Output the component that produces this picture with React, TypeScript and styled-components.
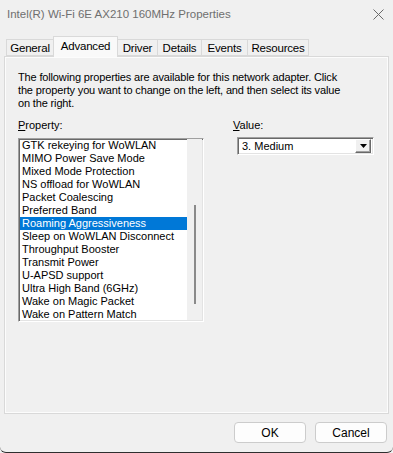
import React from 'react';
import styled, { createGlobalStyle } from 'styled-components';

const GlobalStyle = createGlobalStyle`
  html, body {
    margin: 0;
    padding: 0;
    background: #f0f0f0;
  }
  * { box-sizing: border-box; }
`;

const Window = styled.div`
  width: 393px;
  height: 453px;
  background: #f0f0f0;
  display: flex;
  flex-direction: column;
  font-family: "Liberation Sans", Arial, sans-serif;
  border-bottom: 1px solid #2e2e2e;
  border-radius: 0 0 6px 6px;
  overflow: hidden;
`;

const TitleBar = styled.div`
  height: 30px;
  display: flex;
  align-items: center;
  justify-content: space-between;
  padding: 0 9px 2px 7px;
  font-size: 11.5px;
  color: #6f6f6f;
`;

const CloseIcon = () => (
  <svg width="11" height="11" viewBox="0 0 11 11">
    <path d="M0.5 0.5 L10.5 10.5 M10.5 0.5 L0.5 10.5" stroke="#6a6a6a" strokeWidth="1" fill="none" />
  </svg>
);

const TabStrip = styled.div`
  display: flex;
  align-items: flex-end;
  height: 26px;
  padding-left: 7px;
`;

const Tab = styled.div<{ active?: boolean; w: number }>`
  width: ${p => p.w}px;
  height: ${p => (p.active ? '21px' : '17px')};
  margin-bottom: ${p => (p.active ? '-1px' : '0')};
  padding-bottom: ${p => (p.active ? '3px' : '0')};
  display: flex;
  align-items: center;
  justify-content: center;
  font-size: 11.5px;
  letter-spacing: -0.2px;
  color: #000;
  background: ${p => (p.active ? '#f9f9f9' : '#f0f0f0')};
  border: 1px solid #d9d9d9;
  border-bottom: ${p => (p.active ? 'none' : '1px solid #d9d9d9')};
  margin-left: -1px;
  position: relative;
  z-index: ${p => (p.active ? 1 : 0)};
`;

const Panel = styled.div`
  margin: 0 4px;
  height: 358px;
  border: 1px solid #d9d9d9;
  box-shadow: inset 1px 1px 0 #fcfcfc, inset -1px -1px 0 #fcfcfc;
  padding: 14px 13px 0 13px;
  font-size: 11px;
`;

const Intro = styled.p`
  margin: 0;
  line-height: 13px;
  letter-spacing: -0.15px;
  color: #000;
`;

const Columns = styled.div`
  display: flex;
  margin-top: 9px;
`;

const PropCol = styled.div`
  width: 186px;
  display: flex;
  flex-direction: column;
`;

const ValueCol = styled.div`
  margin-left: 29px;
  display: flex;
  flex-direction: column;
`;

const Label = styled.div`
  height: 13px;
  line-height: 13px;
  margin-bottom: 6px;
  u { text-decoration: underline; text-underline-offset: 1px; }
`;

const ListBox = styled.div`
  height: 184px;
  border: 1px solid;
  border-color: #a0a0a0 #ffffff #ffffff #a0a0a0;
  box-shadow: inset 1px 1px 0 #696969, inset -1px -1px 0 #e3e3e3;
  background: #fff;
  display: flex;
  padding: 0 1px 1px 1px;
  overflow: hidden;
`;

const Items = styled.div`
  flex: 1;
`;

const Item = styled.div<{ selected?: boolean }>`
  height: 13px;
  line-height: 13px;
  padding-left: 2px;
  white-space: nowrap;
  background: ${p => (p.selected ? '#0078d7' : 'transparent')};
  color: ${p => (p.selected ? '#fff' : '#000')};
`;

const ScrollTrack = styled.div`
  width: 15px;
  background: #f0f0f0;
  display: flex;
  justify-content: center;
  padding-top: 66px;
`;

const ScrollThumb = styled.div`
  width: 2px;
  height: 99px;
  margin-left: 1px;
  background: #8a8a8a;
`;

const Combo = styled.div`
  width: 137px;
  height: 18px;
  margin: -1px 0 0 4px;
  border: 1px solid;
  border-color: #a0a0a0 #ffffff #ffffff #a0a0a0;
  box-shadow: inset 1px 1px 0 #696969, inset -1px -1px 0 #e3e3e3;
  background: #fff;
  display: flex;
  align-items: center;
  padding: 2px;
`;

const ComboText = styled.div`
  flex: 1;
  padding-left: 2px;
  line-height: 13px;
`;

const ComboButton = styled.div`
  width: 16px;
  height: 14px;
  background: #f0f0f0;
  border: 1px solid;
  border-color: #fff #696969 #696969 #fff;
  box-shadow: inset -1px -1px 0 #a0a0a0;
  display: flex;
  align-items: center;
  justify-content: center;
`;

const Footer = styled.div`
  flex: 1;
  display: flex;
  justify-content: flex-end;
  align-items: flex-start;
  gap: 9px;
  padding: 8px 6px 0 0;
`;

const Button = styled.div`
  width: 72px;
  height: 21px;
  background: #fdfdfd;
  border: 1px solid #cccccc;
  border-radius: 4px;
  display: flex;
  align-items: center;
  justify-content: center;
  font-size: 12px;
  color: #000;
`;

const properties = [
  'GTK rekeying for WoWLAN',
  'MIMO Power Save Mode',
  'Mixed Mode Protection',
  'NS offload for WoWLAN',
  'Packet Coalescing',
  'Preferred Band',
  'Roaming Aggressiveness',
  'Sleep on WoWLAN Disconnect',
  'Throughput Booster',
  'Transmit Power',
  'U-APSD support',
  'Ultra High Band (6GHz)',
  'Wake on Magic Packet',
  'Wake on Pattern Match',
];

const tabs: [string, number][] = [
  ['General', 48],
  ['Advanced', 65],
  ['Driver', 41],
  ['Details', 45],
  ['Events', 47],
  ['Resources', 62],
];

export default function App() {
  return (
    <>
      <GlobalStyle />
      <Window>
        <TitleBar>
          <span>Intel(R) Wi-Fi 6E AX210 160MHz Properties</span>
          <CloseIcon />
        </TitleBar>
        <TabStrip>
          {tabs.map(([t, w]) => (
            <Tab key={t} w={w} active={t === 'Advanced'}>{t}</Tab>
          ))}
        </TabStrip>
        <Panel>
          <Intro>
            The following properties are available for this network adapter. Click<br />
            the property you want to change on the left, and then select its value<br />
            on the right.
          </Intro>
          <Columns>
            <PropCol>
              <Label><u>P</u>roperty:</Label>
              <ListBox>
                <Items>
                  {properties.map(p => (
                    <Item key={p} selected={p === 'Roaming Aggressiveness'}>{p}</Item>
                  ))}
                </Items>
                <ScrollTrack>
                  <ScrollThumb />
                </ScrollTrack>
              </ListBox>
            </PropCol>
            <ValueCol>
              <Label><u>V</u>alue:</Label>
              <Combo>
                <ComboText>3. Medium</ComboText>
                <ComboButton>
                  <svg width="7" height="4" viewBox="0 0 7 4">
                    <path d="M0 0 H7 L3.5 4 Z" fill="#000" />
                  </svg>
                </ComboButton>
              </Combo>
            </ValueCol>
          </Columns>
        </Panel>
        <Footer>
          <Button>OK</Button>
          <Button>Cancel</Button>
        </Footer>
      </Window>
    </>
  );
}
